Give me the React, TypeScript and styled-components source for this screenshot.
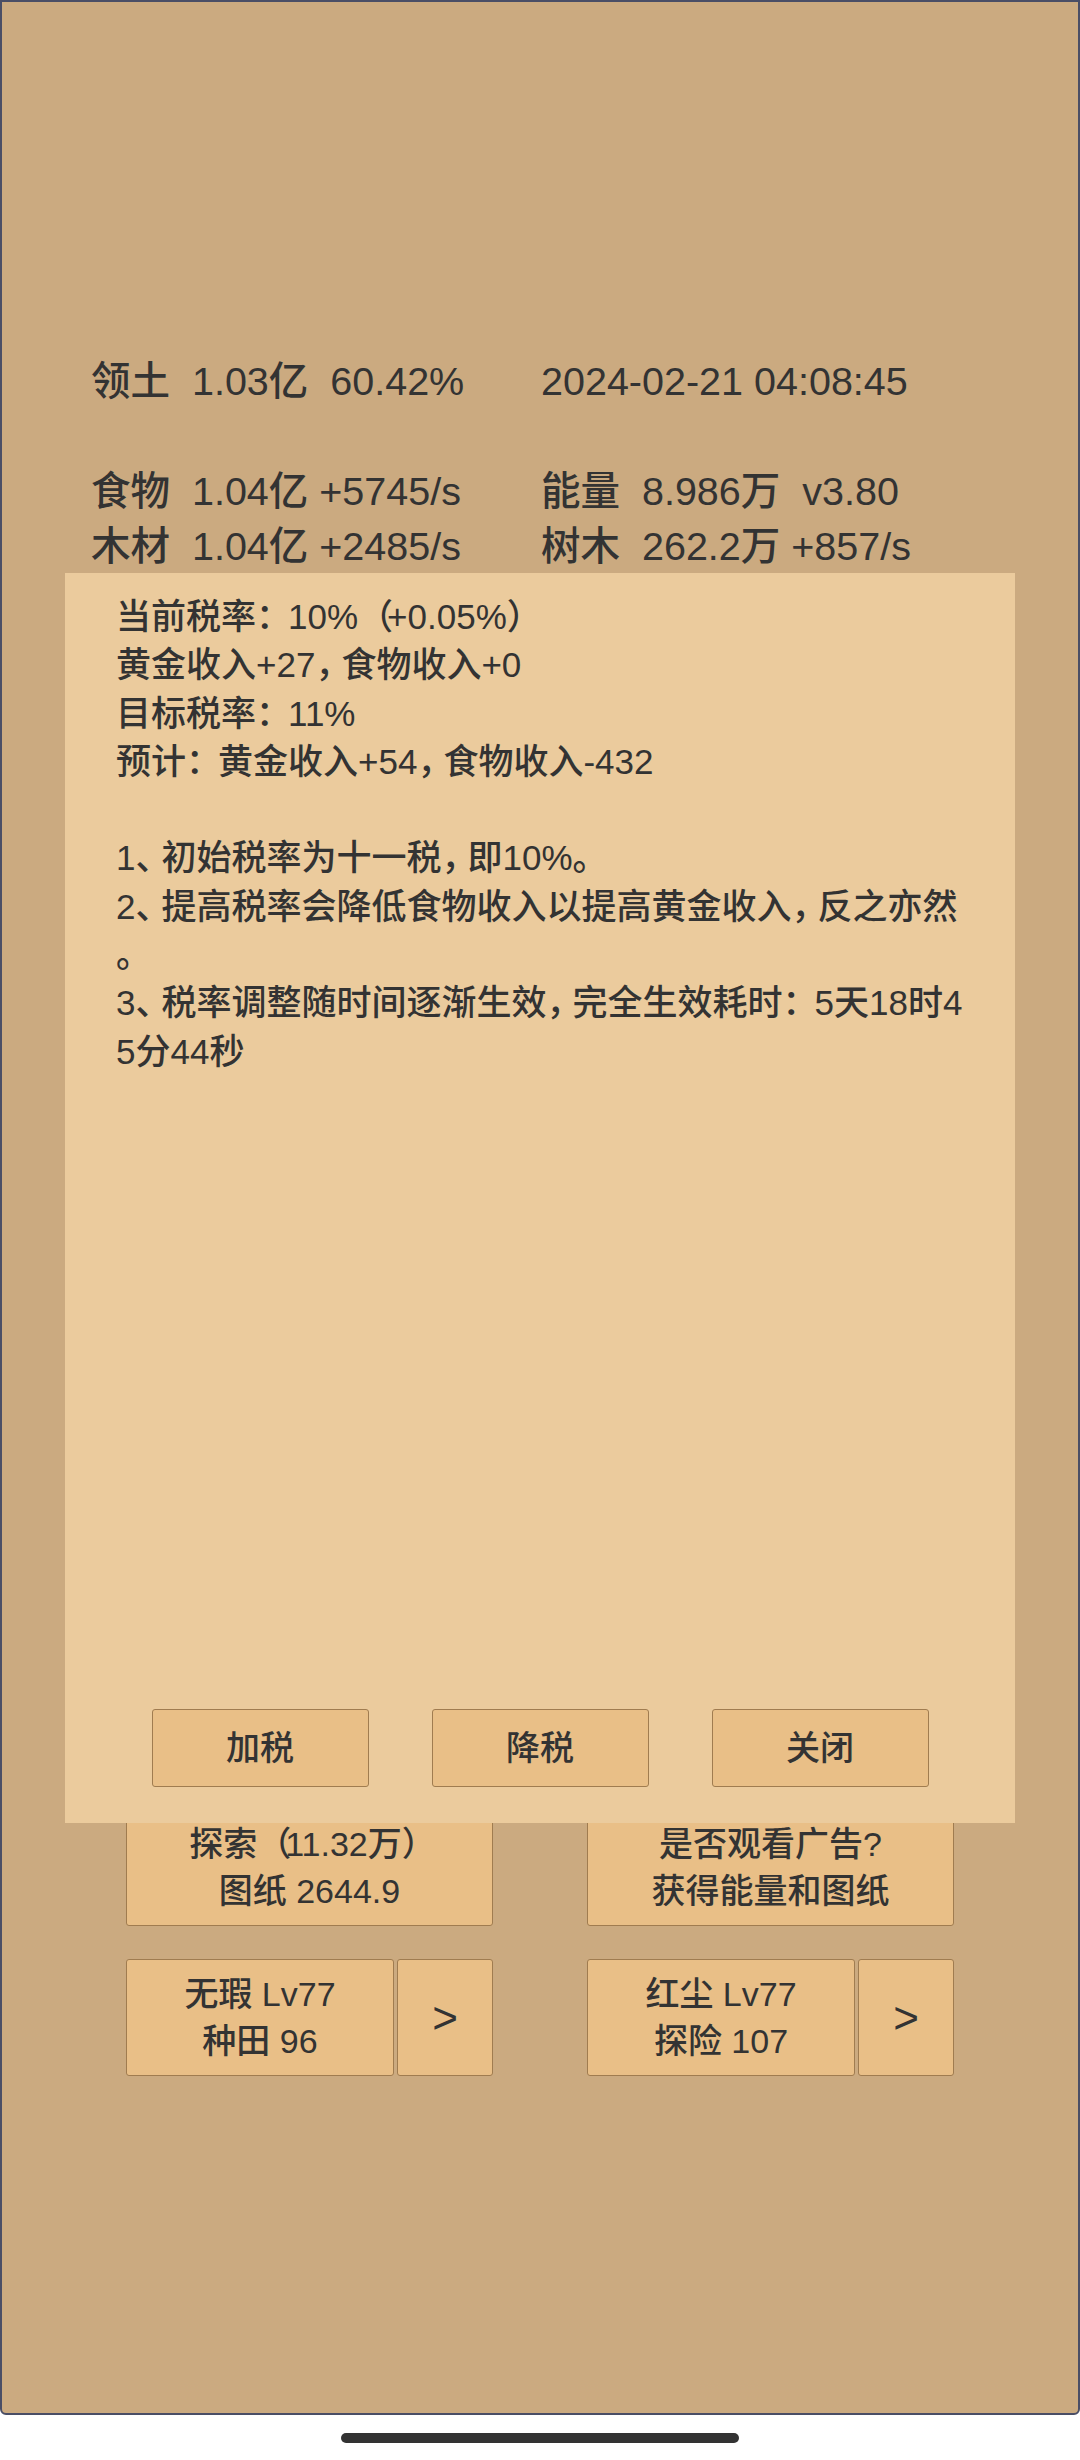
import React from "react";
import styled, { createGlobalStyle } from "styled-components";

const GlobalStyle = createGlobalStyle`
  html, body {
    margin: 0;
    padding: 0;
    background: #ffffff;
  }
  * { box-sizing: border-box; }
`;

const FONT = `"Liberation Sans", "Noto Sans CJK SC", "Noto Sans", sans-serif`;

const Screen = styled.div`
  width: 1080px;
  height: 2460px;
  display: flex;
  flex-direction: column;
  font-family: ${FONT};
  font-weight: 500;
  color: #333333;
`;

const GameFrame = styled.div`
  position: relative;
  height: 2415px;
  flex: none;
  background: #cbaa80;
  border: 2px solid #4a4e66;
  border-radius: 0 0 6px 6px;
  display: flex;
  flex-direction: column;
  padding-top: 352px;
`;

const StatsGrid = styled.div`
  display: grid;
  grid-template-columns: 450px 450px;
  margin-left: 89px;
  font-size: 39.5px;
  line-height: 55px;
  white-space: pre;
`;

const StatCell = styled.div`
  height: 55px;
`;

const ActionArea = styled.div`
  margin-top: 1235px;
  display: flex;
  flex-direction: column;
  gap: 33px;
  align-items: center;
`;

const ActionRow = styled.div`
  display: grid;
  grid-template-columns: 367px 367px;
  column-gap: 94px;
`;

const GameButton = styled.div`
  background: #e9bf87;
  border: 1px solid #a07c50;
  border-radius: 3px;
  display: flex;
  align-items: center;
  justify-content: center;
  text-align: center;
  font-size: 34px;
  line-height: 47px;
  white-space: pre;
`;

const BigButton = styled(GameButton)`
  height: 117px;
  flex-direction: column;
`;

const SplitCell = styled.div`
  display: flex;
  gap: 3px;
  height: 117px;
`;

const MainButton = styled(GameButton)`
  flex: 1;
  flex-direction: column;
`;

const ArrowButton = styled(GameButton)`
  width: 96px;
  flex: none;
  font-size: 44px;
  font-weight: 400;
`;

const Modal = styled.div`
  position: absolute;
  left: 63px;
  top: 571px;
  width: 950px;
  height: 1250px;
  background: #ebcb9d;
  display: flex;
  flex-direction: column;
  padding: 20px 0 36px 51px;
`;

const ModalText = styled.div`
  font-size: 35px;
  line-height: 48.3px;
`;

const TextLine = styled.div`
  height: 48.3px;
  white-space: nowrap;
`;

const Punct = styled.span<{ $tight?: number }>`
  letter-spacing: ${(p) => -(p.$tight ?? 9)}px;
`;

const ModalButtons = styled.div`
  margin-top: auto;
  margin-left: -51px;
  display: flex;
  justify-content: center;
  gap: 63px;
`;

const ModalButton = styled(GameButton)`
  width: 217px;
  height: 78px;
`;

const HomeArea = styled.div`
  flex: 1;
  display: flex;
  align-items: center;
  justify-content: center;
  padding-top: 1px;
`;

const HomeBar = styled.div`
  width: 398px;
  height: 10px;
  border-radius: 5px;
  background: #333333;
`;

const stats: string[] = [
  "领土  1.03亿  60.42%",
  "2024-02-21 04:08:45",
  "",
  "",
  "食物  1.04亿 +5745/s",
  "能量  8.986万  v3.80",
  "木材  1.04亿 +2485/s",
  "树木  262.2万 +857/s",
];

export default function App() {
  return (
    <>
      <GlobalStyle />
      <Screen>
        <GameFrame>
          <StatsGrid>
            {stats.map((s, i) => (
              <StatCell key={i}>{s}</StatCell>
            ))}
          </StatsGrid>

          <ActionArea>
            <ActionRow>
              <BigButton>
                <span>
                  探索<Punct $tight={6}>（</Punct>11.32万<Punct $tight={6}>）</Punct>
                </span>
                <span>图纸 2644.9</span>
              </BigButton>
              <BigButton>
                <span>是否观看广告?</span>
                <span>获得能量和图纸</span>
              </BigButton>
            </ActionRow>
            <ActionRow>
              <SplitCell>
                <MainButton>
                  <span>无瑕 Lv77</span>
                  <span>种田 96</span>
                </MainButton>
                <ArrowButton>&gt;</ArrowButton>
              </SplitCell>
              <SplitCell>
                <MainButton>
                  <span>红尘 Lv77</span>
                  <span>探险 107</span>
                </MainButton>
                <ArrowButton>&gt;</ArrowButton>
              </SplitCell>
            </ActionRow>
          </ActionArea>

          <Modal>
            <ModalText>
              <TextLine>
                当前税率<Punct $tight={3}>：</Punct>10%<Punct $tight={6}>（</Punct>+0.05%<Punct $tight={6}>）</Punct>
              </TextLine>
              <TextLine>
                黄金收入+27<Punct>，</Punct>食物收入+0
              </TextLine>
              <TextLine>
                目标税率<Punct $tight={3}>：</Punct>11%
              </TextLine>
              <TextLine>
                预计<Punct $tight={3}>：</Punct>黄金收入+54<Punct>，</Punct>食物收入-432
              </TextLine>
              <TextLine />
              <TextLine>
                1<Punct>、</Punct>初始税率为十一税<Punct>，</Punct>即10%。
              </TextLine>
              <TextLine>
                2<Punct>、</Punct>提高税率会降低食物收入以提高黄金收入<Punct>，</Punct>反之亦然
              </TextLine>
              <TextLine>。</TextLine>
              <TextLine>
                3<Punct>、</Punct>税率调整随时间逐渐生效<Punct>，</Punct>完全生效耗时<Punct $tight={3}>：</Punct>5天18时4
              </TextLine>
              <TextLine>5分44秒</TextLine>
            </ModalText>
            <ModalButtons>
              <ModalButton>加税</ModalButton>
              <ModalButton>降税</ModalButton>
              <ModalButton>关闭</ModalButton>
            </ModalButtons>
          </Modal>
        </GameFrame>
        <HomeArea>
          <HomeBar />
        </HomeArea>
      </Screen>
    </>
  );
}
